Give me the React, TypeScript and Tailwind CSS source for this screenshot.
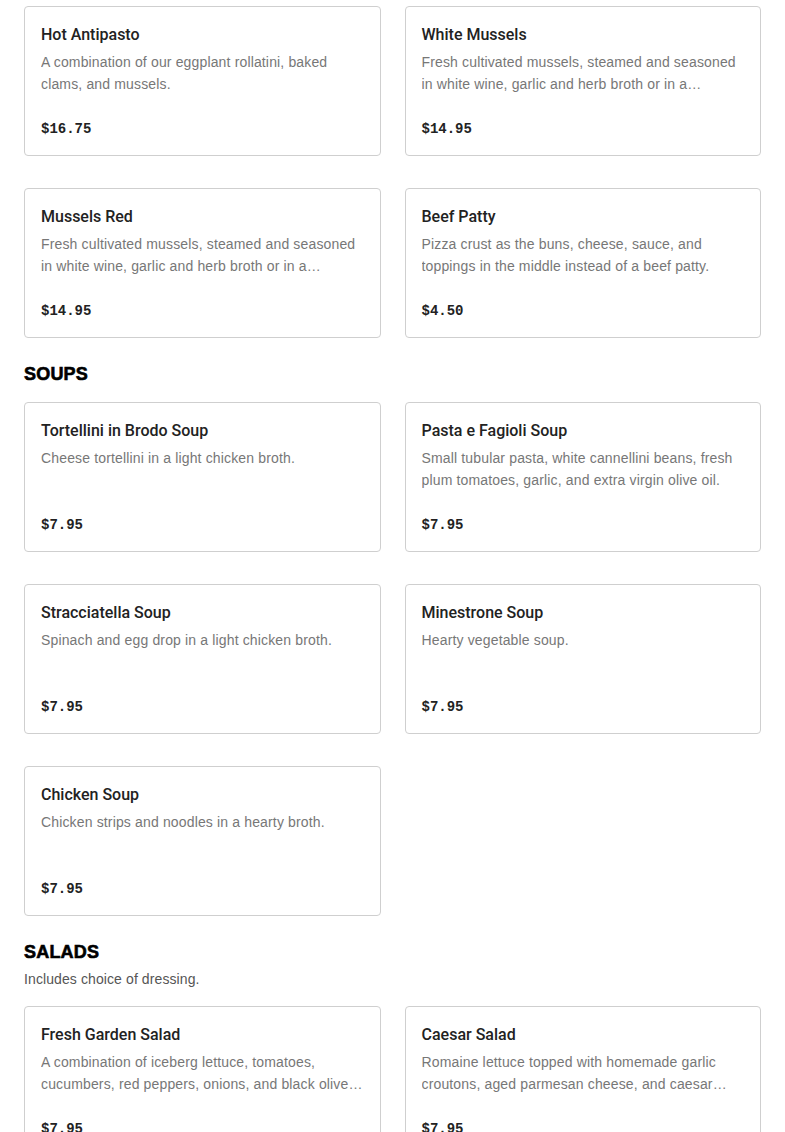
import React from "react";

type Item = { name: string; desc: string; price: string };

const sections: { title?: string; note?: string; items: Item[] }[] = [
  {
    items: [
      { name: "Hot Antipasto", desc: "A combination of our eggplant rollatini, baked clams, and mussels.", price: "$16.75" },
      { name: "White Mussels", desc: "Fresh cultivated mussels, steamed and seasoned in white wine, garlic and herb broth or in a marinara sauce.", price: "$14.95" },
      { name: "Mussels Red", desc: "Fresh cultivated mussels, steamed and seasoned in white wine, garlic and herb broth or in a marinara sauce.", price: "$14.95" },
      { name: "Beef Patty", desc: "Pizza crust as the buns, cheese, sauce, and toppings in the middle instead of a beef patty.", price: "$4.50" },
    ],
  },
  {
    title: "SOUPS",
    items: [
      { name: "Tortellini in Brodo Soup", desc: "Cheese tortellini in a light chicken broth.", price: "$7.95" },
      { name: "Pasta e Fagioli Soup", desc: "Small tubular pasta, white cannellini beans, fresh plum tomatoes, garlic, and extra virgin olive oil.", price: "$7.95" },
      { name: "Stracciatella Soup", desc: "Spinach and egg drop in a light chicken broth.", price: "$7.95" },
      { name: "Minestrone Soup", desc: "Hearty vegetable soup.", price: "$7.95" },
      { name: "Chicken Soup", desc: "Chicken strips and noodles in a hearty broth.", price: "$7.95" },
    ],
  },
  {
    title: "SALADS",
    note: "Includes choice of dressing.",
    items: [
      { name: "Fresh Garden Salad", desc: "A combination of iceberg lettuce, tomatoes, cucumbers, red peppers, onions, and black olive…", price: "$7.95" },
      { name: "Caesar Salad", desc: "Romaine lettuce topped with homemade garlic croutons, aged parmesan cheese, and caesar dressing.", price: "$7.95" },
    ],
  },
];

function Card({ item }: { item: Item }) {
  return (
    <div className="border border-[#cfcfcf] rounded-[4px] bg-white p-4 flex flex-col">
      <div className="text-[16px] leading-6 font-medium font-['Roboto',sans-serif] text-[#222]">{item.name}</div>
      <div className="mt-1 h-[44px] text-[14px] leading-[22px] tracking-[0.15px] text-[#777] line-clamp-2">{item.desc}</div>
      <div className="mt-6 text-[14px] leading-5 font-bold text-[#222] font-['Liberation_Mono',monospace]">{item.price}</div>
    </div>
  );
}

export default function App() {
  return (
    <div className="bg-white min-h-screen px-6 pt-[6px] pb-10 font-['Liberation_Sans',Arial,sans-serif] text-[#222]">
      {sections.map((s, i) => (
        <div key={i} className={i > 0 ? "mt-6" : ""}>
          {s.title && (
            <h2 className="text-[18px] leading-6 font-black tracking-[0.2px] text-black [-webkit-text-stroke:0.6px_black]">{s.title}</h2>
          )}
          {s.note && <p className="mt-1 text-[14px] leading-[22px] tracking-[0.1px] text-[#555]">{s.note}</p>}
          <div className={`grid grid-cols-2 gap-x-6 gap-y-8 ${s.title ? "mt-4" : ""}`}>
            {s.items.map((it) => (
              <Card key={it.name} item={it} />
            ))}
          </div>
        </div>
      ))}
    </div>
  );
}
